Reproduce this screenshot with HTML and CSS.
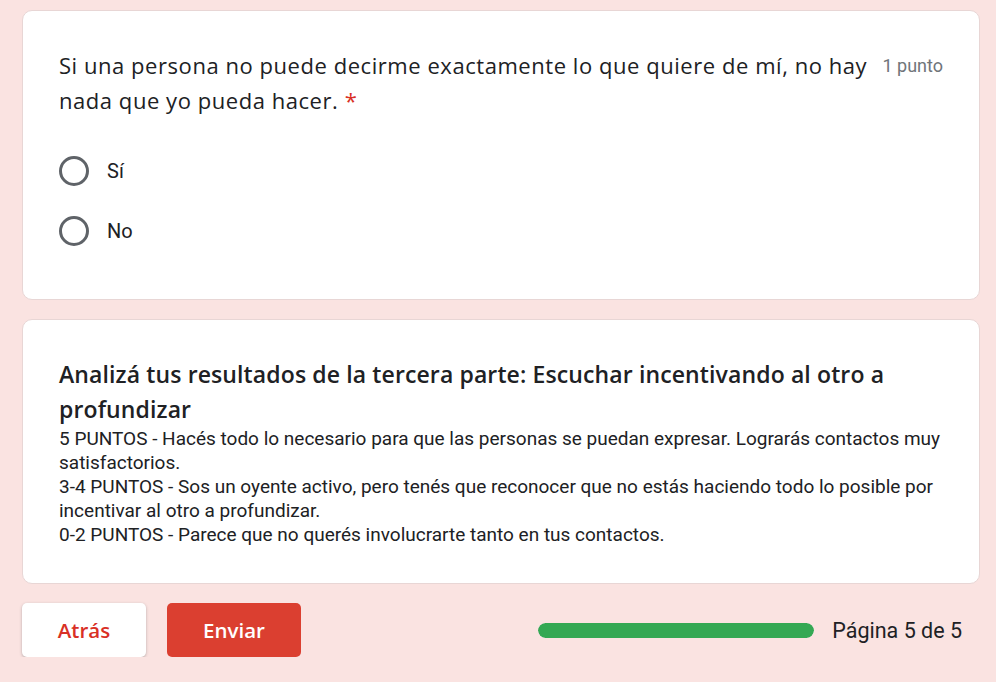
FILE: index.html
```html
<!DOCTYPE html>
<html lang="es">
<head>
<meta charset="utf-8">
<link rel="stylesheet" href="styles.css">
</head>
<body>
<div class="page">
  <div class="card question">
    <div class="q-head">
      <div class="q-title">Si una persona no puede decirme exactamente lo que quiere de mí, no hay nada que yo pueda hacer. <span class="req">*</span></div>
      <div class="q-points">1 punto</div>
    </div>
    <div class="options">
      <label class="option"><span class="radio"></span><span class="opt-label">Sí</span></label>
      <label class="option"><span class="radio"></span><span class="opt-label">No</span></label>
    </div>
  </div>
  <div class="card section">
    <div class="s-title">Analizá tus resultados de la tercera parte: Escuchar incentivando al otro a profundizar</div>
    <div class="s-desc">5 PUNTOS - Hacés todo lo necesario para que las personas se puedan expresar. Lograrás contactos muy satisfactorios.<br>3-4 PUNTOS - Sos un oyente activo, pero tenés que reconocer que no estás haciendo todo lo posible por incentivar al otro a profundizar.<br>0-2 PUNTOS - Parece que no querés involucrarte tanto en tus contactos.</div>
  </div>
  <div class="nav">
    <div class="buttons">
      <button class="btn btn-back">Atrás</button>
      <button class="btn btn-send">Enviar</button>
    </div>
    <div class="progress">
      <div class="bar"><div class="fill" style="width:100%"></div></div>
      <div class="page-label">Página 5 de 5</div>
    </div>
  </div>
</div>
</body>
</html>
```
FILE: styles.css
```css
html, body {
  margin: 0;
  padding: 0;
  background: #fae3e1;
}
body {
  font-family: Roboto, "Liberation Sans", sans-serif;
  color: #202124;
}
.page {
  padding: 10px 16px 0 22px;
  display: flex;
  flex-direction: column;
  gap: 19px;
}
.card {
  background: #fff;
  border: 1px solid #e8d6d5;
  border-radius: 10px;
  box-sizing: border-box;
}
.question {
  height: 290px;
  padding: 37px 36px 0 36px;
}
.q-head {
  display: flex;
  align-items: flex-start;
  gap: 12px;
}
.q-title {
  flex: 1;
  font-family: "Open Sans", sans-serif;
  font-size: 22px;
  letter-spacing: 0.55px;
  line-height: 35px;
  color: #202124;
}
.req {
  color: #d93025;
}
.q-points {
  font-size: 18px;
  color: #70757a;
  line-height: 35px;
  white-space: nowrap;
}
.options {
  margin-top: 38px;
  display: flex;
  flex-direction: column;
  gap: 30px;
}
.option {
  display: flex;
  align-items: center;
  height: 30px;
}
.radio {
  width: 30px;
  height: 30px;
  box-sizing: border-box;
  border: 3px solid #5f6368;
  border-radius: 50%;
  margin-right: 18px;
}
.opt-label {
  font-size: 20px;
  color: #202124;
}
.section {
  height: 265px;
  padding: 37px 36px 0 36px;
}
.s-title {
  font-family: "Open Sans", sans-serif;
  font-weight: 600;
  font-size: 23px;
  letter-spacing: 0.12px;
  line-height: 35px;
  color: #202124;
}
.s-desc {
  font-size: 19px;
  line-height: 24px;
  color: #202124;
}
.nav {
  display: flex;
  align-items: center;
  justify-content: space-between;
  padding-right: 18px;
}
.buttons {
  display: flex;
  gap: 21px;
}
.btn {
  height: 54px;
  border: none;
  border-radius: 5px;
  font-family: "Open Sans", sans-serif;
  font-weight: 600;
  font-size: 20.5px;
}
.btn-back {
  width: 124px;
  background: #fff;
  color: #d93025;
  box-shadow: 0 1px 3px rgba(60,64,67,0.35);
}
.btn-send {
  width: 134px;
  background: #db3f30;
  color: #fff;
}
.progress {
  display: flex;
  align-items: center;
  gap: 18px;
}
.bar {
  width: 276px;
  height: 15px;
  border-radius: 8px;
  background: #e0e0e0;
  overflow: hidden;
}
.fill {
  height: 100%;
  background: #34a853;
  border-radius: 8px;
}
.page-label {
  font-size: 21.5px;
  color: #202124;
}
```
